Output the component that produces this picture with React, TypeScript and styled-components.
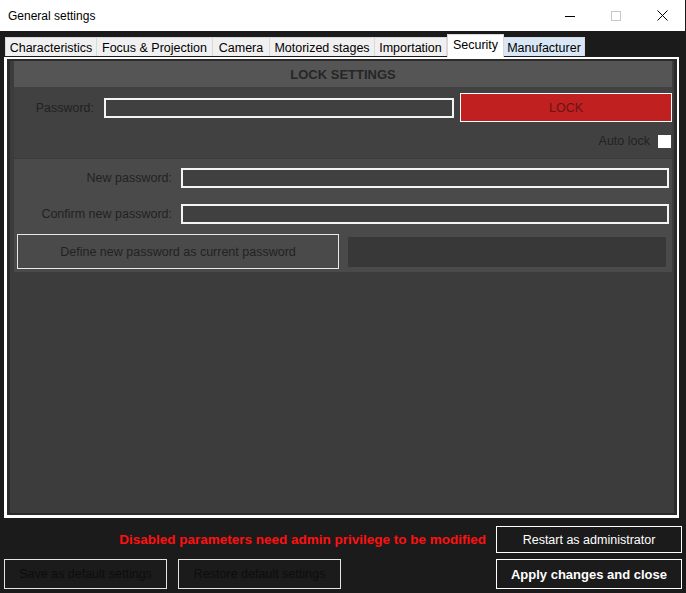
import { FC } from 'react';
import styled, { createGlobalStyle } from 'styled-components';

const GlobalStyle = createGlobalStyle`
  html, body {
    margin: 0;
    padding: 0;
    background: #1b1b1b;
  }
  body {
    font-family: "Liberation Sans", Arial, sans-serif;
    font-size: 12px;
  }
`;

const Window = styled.div`
  width: 686px;
  height: 593px;
  display: flex;
  flex-direction: column;
  background: #1b1b1b;
  overflow: hidden;
`;

const TitleBar = styled.div`
  height: 31px;
  display: flex;
  align-items: center;
  background: #fff;
  color: #000;
  padding-left: 8px;
  margin-right: 1px;
`;

const Title = styled.div`
  flex: 1;
  font-size: 12px;
`;

const Caption = styled.div`
  width: 46px;
  height: 31px;
  display: flex;
  align-items: center;
  justify-content: center;
`;

const TabStrip = styled.div`
  display: flex;
  align-items: flex-end;
  height: 23px;
  margin-top: 3px;
  padding-left: 5px;
`;

const Tab = styled.div<{ $w: number; $active?: boolean; $hover?: boolean }>`
  width: ${(p) => p.$w}px;
  height: ${(p) => (p.$active ? 23 : 19)}px;
  line-height: ${(p) => (p.$active ? 21 : 20)}px;
  margin-bottom: ${(p) => (p.$active ? 0 : 1)}px;
  box-sizing: border-box;
  text-align: center;
  font-size: 12.5px;
  background: ${(p) => (p.$active ? '#fff' : p.$hover ? '#d8e6f5' : '#f0f0f0')};
  border: 1px solid #d9d9d9;
  border-bottom: none;
  border-left: ${(p) => (p.$active ? '1px solid #d9d9d9' : 'none')};
  color: #000;
  white-space: nowrap;
  &:first-child {
    border-left: 1px solid #d9d9d9;
  }
`;

const Panel = styled.div`
  margin-left: 4px;
  width: 675px;
  height: 461px;
  box-sizing: border-box;
  border: solid #fff;
  border-width: 2px 2px 3px 3px;
  display: flex;
`;

const PanelInner = styled.div`
  flex: 1;
  border: solid #2b2b2b;
  border-width: 2px 3px 2px 3px;
  background: #3c3c3c;
  padding: 0 2px 0 4px;
`;

const Group = styled.div<{ $bg: string }>`
  background: ${(p) => p.$bg};
  margin-bottom: 1px;
`;

const GroupHeader = styled.div`
  height: 26px;
  line-height: 27px;
  background: #555;
  color: #262626;
  font-weight: bold;
  font-size: 13px;
  text-align: center;
`;

const LockBody = styled.div`
  padding: 6px 0 10px;
  display: flex;
  flex-direction: column;
  gap: 12px;
`;

const Row = styled.div<{ $mt?: number }>`
  display: flex;
  align-items: center;
  margin-top: ${(p) => p.$mt ?? 0}px;
`;

const Label = styled.div<{ $w: number }>`
  width: ${(p) => p.$w}px;
  text-align: right;
  color: #222;
  font-size: 12.5px;
  white-space: nowrap;
`;

const Field = styled.div<{ $w: number; $ml: number }>`
  width: ${(p) => p.$w}px;
  margin-left: ${(p) => p.$ml}px;
  height: 20px;
  box-sizing: border-box;
  border: 2px solid #f4f4f4;
  background: #404040;
`;

const LockButton = styled.div`
  margin-left: 6px;
  width: 212px;
  height: 29px;
  box-sizing: border-box;
  border: 1px solid #fff;
  background: #c0201f;
  color: #6a1515;
  display: flex;
  align-items: center;
  justify-content: center;
  font-size: 12.5px;
`;

const AutoLockRow = styled.div`
  display: flex;
  justify-content: flex-end;
  align-items: center;
  gap: 8px;
  padding-right: 1px;
  color: #222;
  font-size: 12.5px;
`;

const Check = styled.div`
  width: 13px;
  height: 13px;
  background: #fff;
`;

const NewBody = styled.div`
  padding: 9px 0 3px;
  display: flex;
  flex-direction: column;
`;

const DefineRow = styled.div`
  display: flex;
  align-items: center;
  padding-left: 3px;
  margin-top: 10px;
`;

const DefineButton = styled.div`
  width: 322px;
  height: 35px;
  box-sizing: border-box;
  border: 1px solid #e8e8e8;
  color: #222;
  font-size: 12.5px;
  display: flex;
  align-items: center;
  justify-content: center;
`;

const StatusBox = styled.div`
  margin-left: 9px;
  width: 318px;
  height: 30px;
  background: #383838;
`;

const Footer = styled.div`
  padding: 8px 4px 4px 4px;
  display: flex;
  flex-direction: column;
  gap: 6px;
`;

const FooterRow = styled.div`
  display: flex;
  align-items: center;
`;

const Warning = styled.div`
  flex: 1;
  text-align: right;
  padding-right: 10px;
  color: #ff1010;
  font-weight: bold;
  font-size: 13.5px;
`;

const FooterButton = styled.div<{ $w: number; $h: number; $ml?: number; $bold?: boolean; $disabled?: boolean }>`
  width: ${(p) => p.$w}px;
  height: ${(p) => p.$h}px;
  margin-left: ${(p) => p.$ml ?? 0}px;
  box-sizing: border-box;
  border: 1px solid ${(p) => (p.$disabled ? '#e4e4e4' : '#fff')};
  color: ${(p) => (p.$disabled ? '#0d0d0d' : '#fff')};
  font-weight: ${(p) => (p.$bold ? 'bold' : 'normal')};
  font-size: ${(p) => (p.$bold ? 13 : 12.5)}px;
  display: flex;
  align-items: center;
  justify-content: center;
`;

const Spacer = styled.div`
  flex: 1;
`;

const tabs: [string, number][] = [
  ['Characteristics', 92],
  ['Focus & Projection', 116],
  ['Camera', 57],
  ['Motorized stages', 105],
  ['Importation', 72],
  ['Security', 57],
  ['Manufacturer', 81],
];

const App: FC = () => {
  return (
    <Window>
      <GlobalStyle />
      <TitleBar>
        <Title>General settings</Title>
        <Caption>
          <svg width="10" height="10" viewBox="0 0 10 10">
            <line x1="0" y1="5.5" x2="10" y2="5.5" stroke="#000" strokeWidth="1" />
          </svg>
        </Caption>
        <Caption>
          <svg width="10" height="10" viewBox="0 0 10 10">
            <rect x="0.5" y="0.5" width="9" height="9" fill="none" stroke="#c8c8c8" strokeWidth="1" />
          </svg>
        </Caption>
        <Caption>
          <svg width="11" height="11" viewBox="0 0 11 11">
            <path d="M0.5 0.5 L10.5 10.5 M10.5 0.5 L0.5 10.5" stroke="#000" strokeWidth="1" />
          </svg>
        </Caption>
      </TitleBar>

      <TabStrip>
        {tabs.map(([t, w]) => (
          <Tab key={t} $w={w} $active={t === 'Security'} $hover={t === 'Manufacturer'}>
            {t}
          </Tab>
        ))}
      </TabStrip>

      <Panel>
        <PanelInner>
          <Group $bg="#414141">
            <GroupHeader>LOCK SETTINGS</GroupHeader>
            <LockBody>
              <Row>
                <Label $w={80}>Password:</Label>
                <Field $w={350} $ml={10} />
                <LockButton>LOCK</LockButton>
              </Row>
              <AutoLockRow>
                Auto lock
                <Check />
              </AutoLockRow>
            </LockBody>
          </Group>

          <Group $bg="#4a4a4a">
            <NewBody>
              <Row>
                <Label $w={158}>New password:</Label>
                <Field $w={488} $ml={9} />
              </Row>
              <Row $mt={16}>
                <Label $w={158}>Confirm new password:</Label>
                <Field $w={488} $ml={9} />
              </Row>
              <DefineRow>
                <DefineButton>Define new password as current password</DefineButton>
                <StatusBox />
              </DefineRow>
            </NewBody>
          </Group>
        </PanelInner>
      </Panel>

      <Footer>
        <FooterRow>
          <Warning>Disabled parameters need admin privilege to be modified</Warning>
          <FooterButton $w={186} $h={27}>Restart as administrator</FooterButton>
        </FooterRow>
        <FooterRow>
          <FooterButton $w={163} $h={30} $disabled>Save as default settings</FooterButton>
          <FooterButton $w={163} $h={30} $ml={11} $disabled>Restore default settings</FooterButton>
          <Spacer />
          <FooterButton $w={186} $h={30} $bold>Apply changes and close</FooterButton>
        </FooterRow>
      </Footer>
    </Window>
  );
};

export default App;
